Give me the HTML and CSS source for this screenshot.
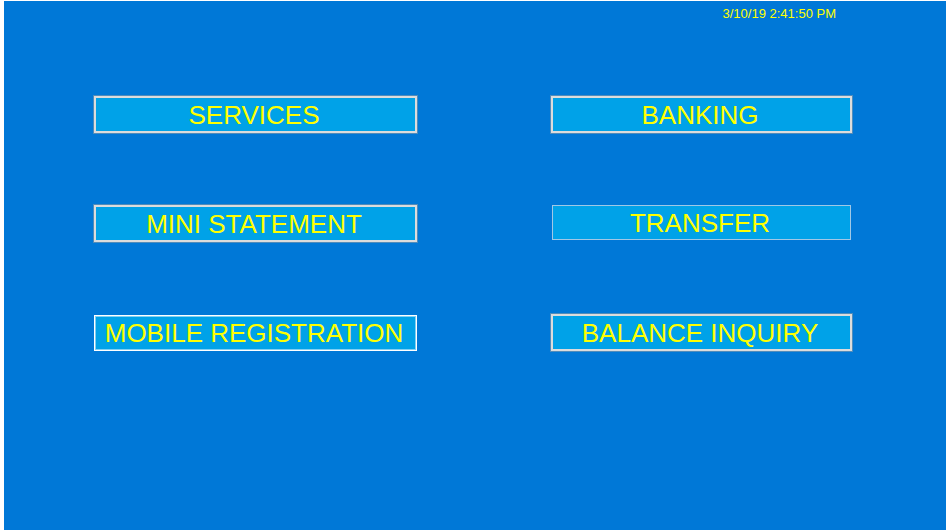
FILE: index.html
```
<!DOCTYPE html>
<html lang="en">
<head>
<meta charset="utf-8">
<title>Main Menu</title>
<link rel="stylesheet" href="styles.css">
</head>
<body>
<main class="screen">
<header class="status"><time datetime="2019-03-10T14:41:50">3/10/19 2:41:50 PM</time></header>
<nav class="menu" aria-label="Transactions">
<button class="option" type="button">SERVICES</button>
<button class="option" type="button">BANKING</button>
<button class="option" type="button">MINI STATEMENT</button>
<button class="option option-thin" type="button">TRANSFER</button>
<button class="option option-bright" type="button">MOBILE REGISTRATION</button>
<button class="option" type="button">BALANCE INQUIRY</button>
</nav>
</main>
</body>
</html>
```
FILE: styles.css
```
* {
  box-sizing: border-box;
}

body {
  margin: 0;
  background: #fff;
  font-family: "Liberation Sans", Arial, sans-serif;
}

.screen {
  min-height: 100vh;
  border: solid #fff;
  border-width: 1px 1px 0 4px;
  background: #0078d7;
  color: #ff0;
}

.status {
  display: flex;
  justify-content: flex-end;
  padding: 4px 110px 0 0;
  font-size: 13px;
  line-height: 18px;
}

.menu {
  display: grid;
  grid-template-columns: 323fr 301fr;
  gap: 72px 134px;
  padding: 73px 94px 0 90px;
}

.option {
  height: 37px;
  padding: 0 3px 0 0;
  border: 2px solid #dcdcdc;
  background: #00a2e8;
  box-shadow: 0 0 0 1px rgba(160, 160, 160, 0.5);
  color: inherit;
  font-family: inherit;
  font-size: 26px;
  line-height: 32px;
  white-space: nowrap;
}

.option-thin {
  height: 35px;
  margin: 0 1px;
  border: 1px solid #a0c8e6;
  box-shadow: none;
}

.option-bright {
  height: 36px;
  margin-top: 1px;
  border: 1px solid #fff;
  box-shadow: inset 0 0 0 1px #80d0f4;
}
```
